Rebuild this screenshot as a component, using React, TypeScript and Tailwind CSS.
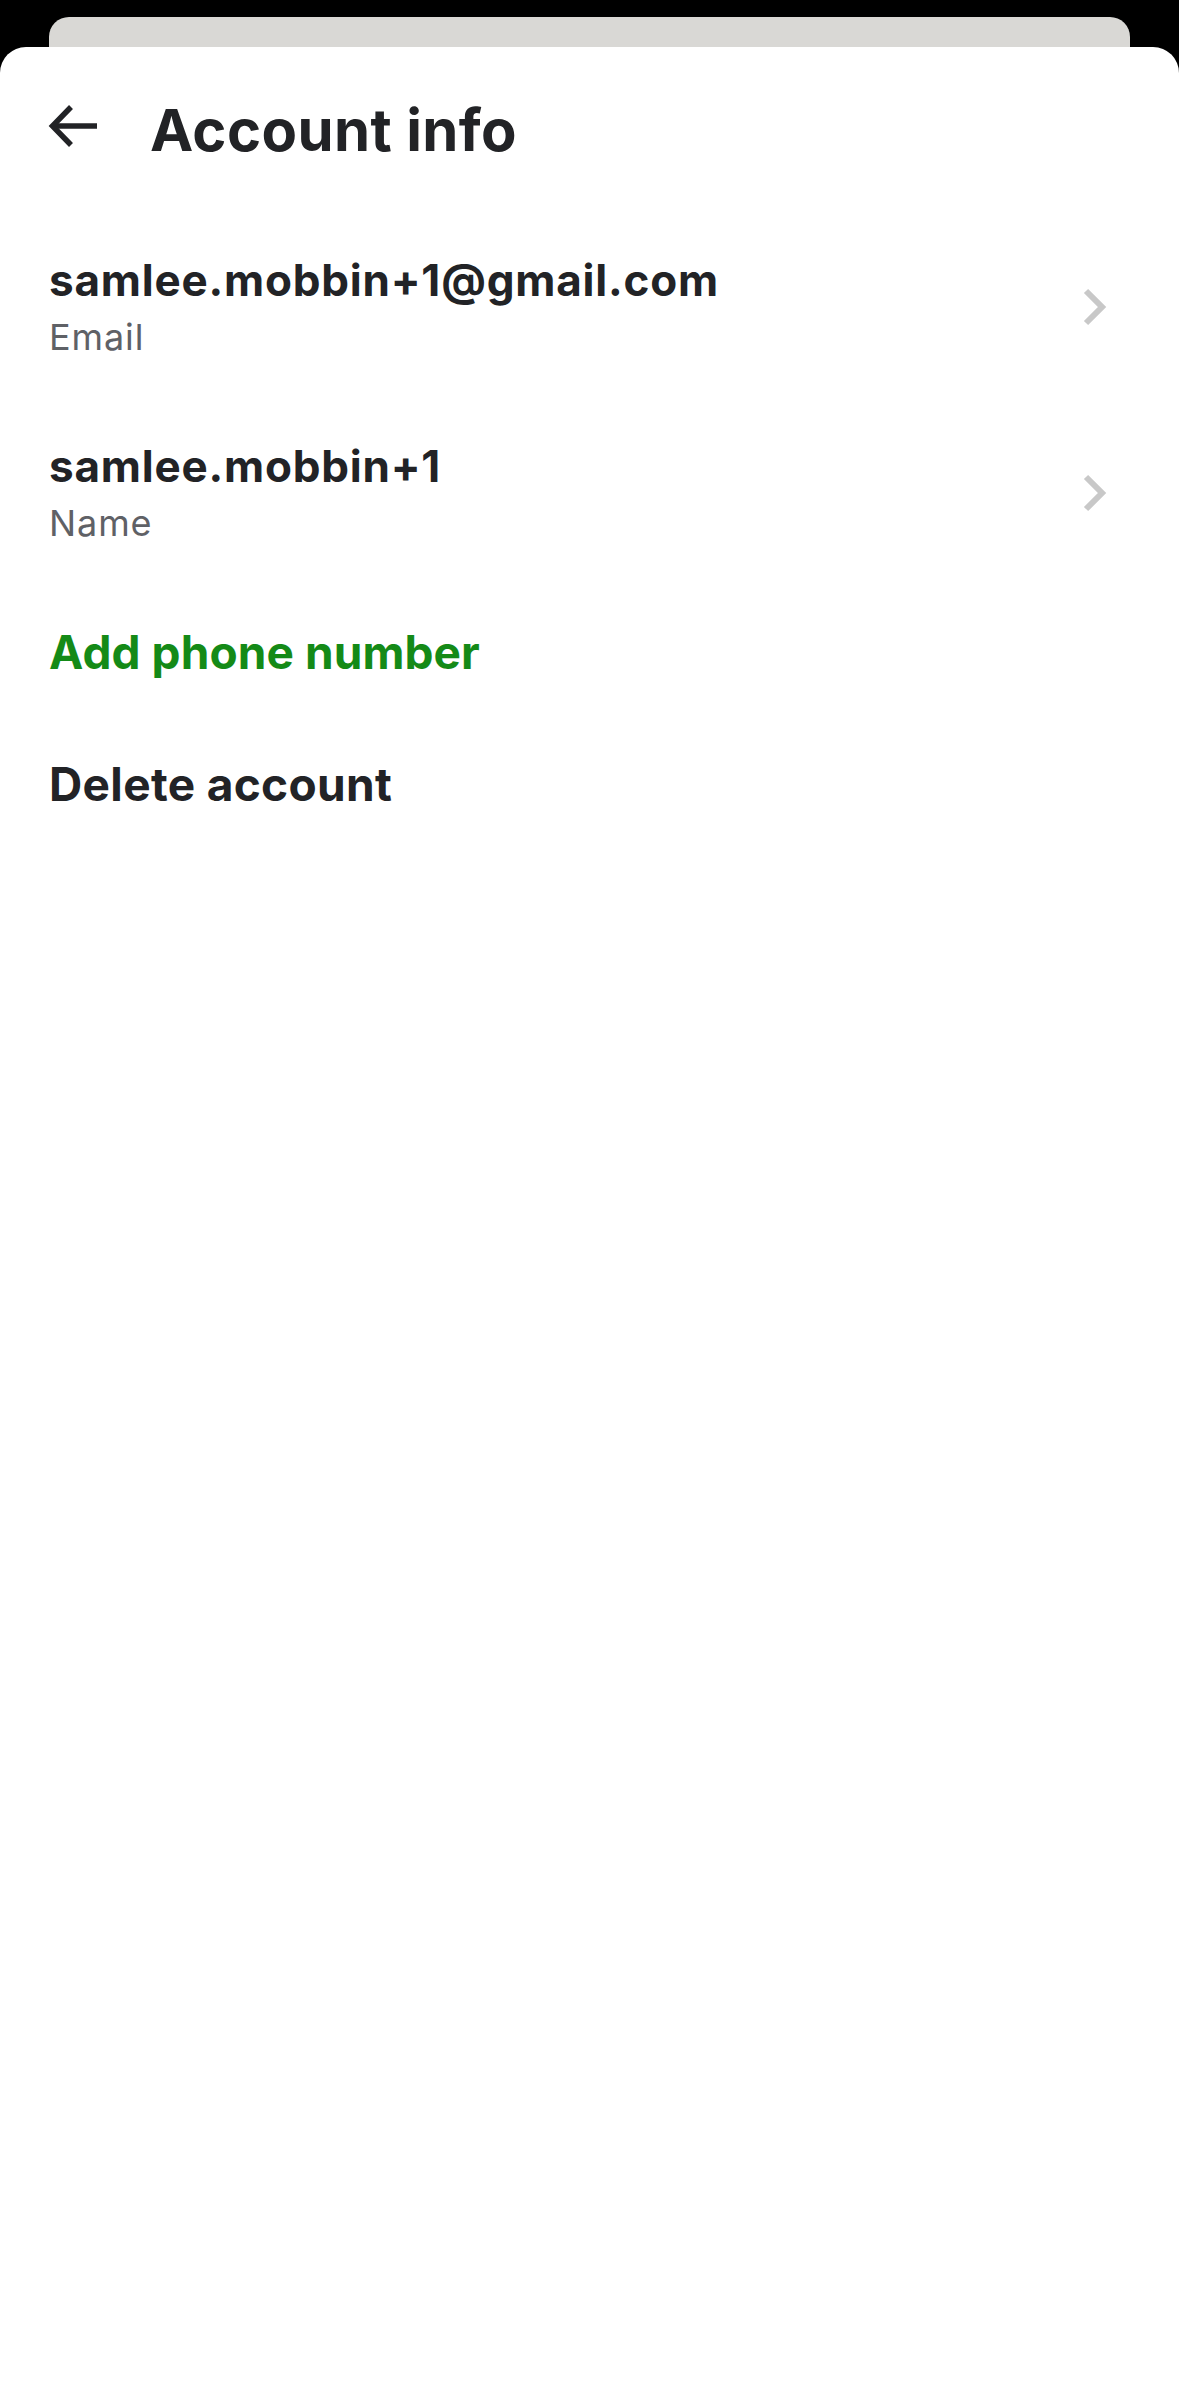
import React from "react";

const font = { fontFamily: "Inter, 'Noto Sans', sans-serif" };

function Chevron() {
  return (
    <svg width="26" height="38" viewBox="0 0 26 38" fill="none">
      <polyline points="4,3 20,19 4,35" stroke="#c8c8c8" strokeWidth="6" strokeLinejoin="miter" />
    </svg>
  );
}

function InfoRow({ value, label }: { value: string; label: string }) {
  return (
    <div className="flex items-center justify-between pl-[49px] pr-[71px]">
      <div>
        <div className="text-[44px] leading-[52px] font-bold tracking-[0.8px] text-[#222326]">
          {value}
        </div>
        <div className="mt-[9px] text-[36px] leading-[44px] tracking-[0.9px] text-[#5f6166]">{label}</div>
      </div>
      <Chevron />
    </div>
  );
}

export default function App() {
  return (
    <div className="min-h-[2396px] bg-black flex flex-col" style={font}>
      <div className="mx-[49px] mt-[17px] h-[30px] rounded-t-[20px] bg-[#d9d8d5]" />
      <div className="flex-1 bg-white rounded-t-[26px]">
        <div className="flex items-center pl-[47px] pt-[53px]">
          <svg width="52" height="42" viewBox="0 0 52 42" fill="none" className="mb-[8px]">
            <path d="M5 21 H50" stroke="#222326" strokeWidth="5.5" />
            <path d="M24 2 L5.5 21 L24 40" stroke="#222326" strokeWidth="5.5" />
          </svg>
          <h1 className="ml-[51px] text-[58px] leading-[60px] font-bold tracking-[0.4px] text-[#222326]">
            Account info
          </h1>
        </div>

        <div className="mt-[94px]">
          <InfoRow value="samlee.mobbin+1@gmail.com" label="Email" />
        </div>
        <div className="mt-[81px]">
          <InfoRow value="samlee.mobbin+1" label="Name" />
        </div>

        <div className="mt-[81px] pl-[49px]">
          <button className="text-[46px] leading-[52px] font-bold tracking-[0.1px] text-[#148a17]">
            Add phone number
          </button>
        </div>
        <div className="mt-[80px] pl-[49px]">
          <button className="text-[46px] leading-[52px] font-bold tracking-[0.35px] text-[#222326]">
            Delete account
          </button>
        </div>
      </div>
    </div>
  );
}
